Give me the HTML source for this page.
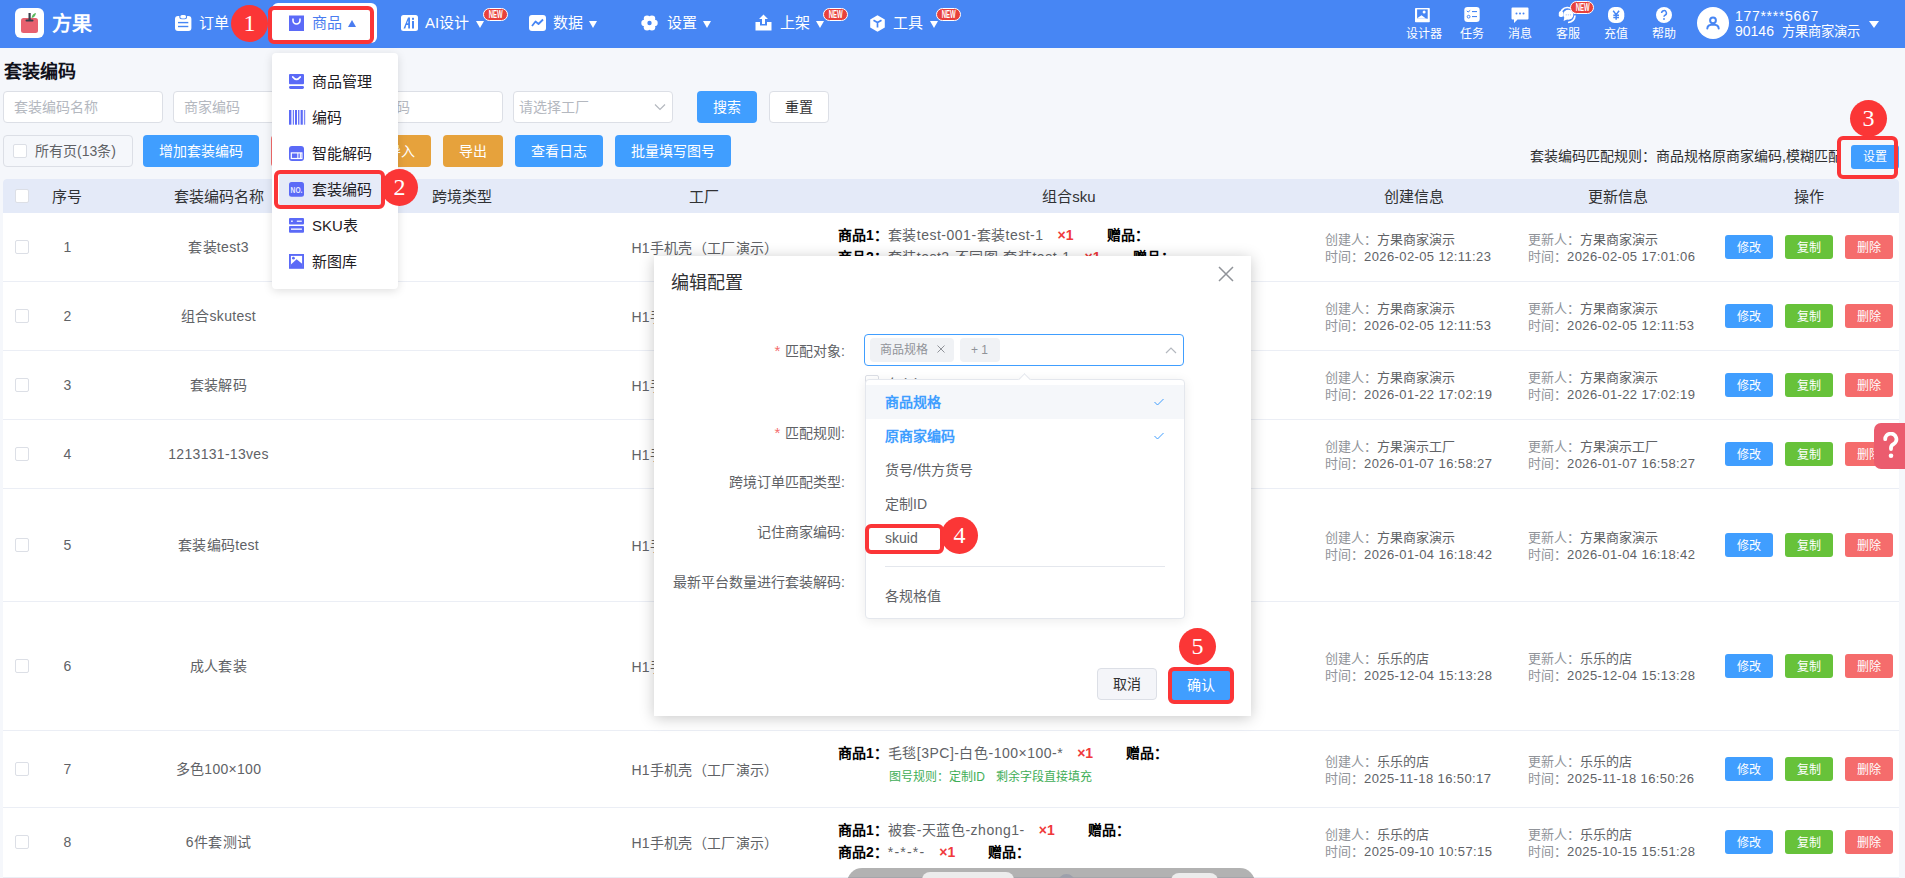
<!DOCTYPE html>
<html lang="zh-CN"><head><meta charset="utf-8">
<style>
*{box-sizing:border-box;margin:0;padding:0}
html,body{width:1905px;height:878px;overflow:hidden}
body{position:relative;background:#f5f7fb;font-family:"Liberation Sans",sans-serif;color:#303133;font-size:14px}
.a{position:absolute;white-space:nowrap}
#hdr{position:absolute;left:0;top:0;width:1905px;height:48px;background:#4786f4}
.nav{position:absolute;top:0;height:48px;color:#fff;font-size:15px}
.nav .t{position:absolute;top:14px;line-height:18px}
.tri{position:absolute;width:0;height:0;border-left:4.5px solid transparent;border-right:4.5px solid transparent}
.tri.d{border-top:7px solid #fff}
.tri.u{border-bottom:7px solid #4a7cf0}
.new{position:absolute;height:13px;width:25px;border-radius:7px;background:#e8413c;border:1px solid #fff;color:#fff;font-size:10px;font-weight:bold;line-height:11px;text-align:center;font-family:"Liberation Sans Narrow","Liberation Sans",sans-serif}
.new span{display:inline-block;transform:scaleX(0.6);letter-spacing:0;font-size:10px;font-weight:900}
.ric{position:absolute;top:0;width:40px;height:48px;color:#fff;font-size:12px;text-align:center}
.ric .t{position:absolute;left:0;right:0;top:27px;line-height:13px}
.circ{position:absolute;border-radius:50%;background:#fb3636;color:#fff;font-family:"Liberation Serif",serif;text-align:center}
.redbox{position:absolute;border:4px solid #fb3537;border-radius:6px}
.inp{position:absolute;height:32px;background:#fff;border:1px solid #dcdfe6;border-radius:4px;color:#b4b8bf;font-size:14px;line-height:30px;padding-left:10px}
.btn{position:absolute;height:32px;border-radius:4px;color:#fff;font-size:14px;line-height:32px;text-align:center}
.blue{background:#409eff}
.orange{background:#e6a23c}
.red{background:#f56c6c}
.green{background:#67c23a}
.cb{position:absolute;width:14px;height:14px;border:1px solid #dcdfe6;border-radius:2px;background:#fff}
#tbl{position:absolute;left:4px;top:179px;width:1895px;height:699px;background:#fff}
.th{position:absolute;top:0;height:33px;background:#e4eaf8;width:1895px}
.th .h{position:absolute;top:8px;line-height:17px;font-size:14px;color:#303133;transform:translateX(-50%)}
.rowline{position:absolute;left:0;width:1895px;height:1px;background:#ebeef5}
.cell{position:absolute;font-size:14px;color:#606266;line-height:16px;letter-spacing:0.3px}
.cc{transform:translateX(-50%)}
.info{position:absolute;font-size:13px;line-height:17px;color:#606266}
.info .g{color:#909399}
.sb{position:absolute;width:48px;height:24px;border-radius:3px;color:#fff;font-size:12px;line-height:24px;padding-top:1px;text-align:center}
.sku{position:absolute;font-size:14px;line-height:17px;color:#606266}
.sku b{color:#000;font-weight:bold}
.hd{font-size:15px;line-height:17px;color:#303133;transform:translateX(-50%)}
.dg{letter-spacing:0.4px}
.mi{font-size:15px;line-height:18px;color:#1f2024}
.dl{font-size:14px;line-height:17px;color:#606266;text-align:right}
.rq{color:#f56c6c;font-size:15px;margin-right:1px}
.opt{left:885px;font-size:14px;line-height:18px;color:#606266}
.opt.sel{color:#409eff;font-weight:bold}
.sku .pn{letter-spacing:0.5px}
.sku .x{color:#f0393b;font-weight:bold}
</style></head><body>

<div id="hdr"></div>

<!-- logo -->
<svg class="a" style="left:15px;top:8px" width="30" height="30" viewBox="0 0 30 30">
<rect x="0" y="0" width="29" height="30" rx="6" fill="#fff"/>
<rect x="6" y="10" width="17" height="15" rx="2.5" fill="#e8616f"/>
<rect x="13.5" y="5" width="2.2" height="8" fill="#3a3f4b"/>
<rect x="10.5" y="11.5" width="8" height="2" rx="1" fill="#3a3f4b"/>
<path d="M16.5 10 C17 7 18.5 5.5 21 5 C20.5 8 19 9.5 16.5 10Z" fill="#5cb85c"/>
</svg>
<div class="a" style="left:52px;top:13px;font-size:20px;font-weight:900;color:#fff;line-height:22px;letter-spacing:0px">方果</div>

<!-- 订单 -->
<svg class="a" style="left:175px;top:15px" width="17" height="16" viewBox="0 0 17 16">
<rect x="0" y="1" width="16.4" height="15" rx="3" fill="#fff"/>
<rect x="4.3" y="-0.7" width="7.8" height="5" rx="2.5" fill="#4786f4"/>
<rect x="5.3" y="0.1" width="5.8" height="3.4" rx="1.7" fill="#fff"/>
<rect x="3" y="6.9" width="10.3" height="1.4" fill="#4786f4"/><rect x="3" y="10.8" width="10.3" height="1.4" fill="#4786f4"/>
</svg>
<div class="a" style="left:199px;top:14px;font-size:15px;line-height:18px;color:#fff">订单</div>

<!-- 商品 active -->
<div class="a" style="left:272px;top:3px;width:105px;height:40px;background:#fff;border-radius:6px"></div>
<svg class="a" style="left:288px;top:15px" width="17" height="16" viewBox="0 0 17 16">
<path d="M1 0.5 h15 v15.5 h-15z" fill="#5b6af7"/>
<path d="M5 3.5 v2 a3.5 3.5 0 0 0 7 0 v-2" stroke="#fff" stroke-width="1.6" fill="none"/>
</svg>
<div class="a" style="left:312px;top:14px;font-size:15px;line-height:18px;color:#4a7cf0">商品</div>
<div class="tri u" style="left:348px;top:20px"></div>
<div class="redbox" style="left:268px;top:6px;width:106px;height:38px"></div>
<div class="circ" style="left:231px;top:5px;width:37px;height:37px;font-size:24px;line-height:36px">1</div>

<!-- AI设计 -->
<svg class="a" style="left:401px;top:15px" width="17" height="16" viewBox="0 0 17 16">
<rect x="0" y="0" width="17" height="16" rx="2.5" fill="#fff"/>
<path d="M2.5 13.5 L7 2.5 L9 2.5 L9 13.5 L7.2 13.5 L7.2 10 L5.3 10 L4.3 13.5Z M6 8.3 L7.2 8.3 L7.2 5.3Z" fill="#4786f4"/>
<rect x="11" y="6" width="2" height="7.5" fill="#4786f4"/><rect x="11" y="2.8" width="2" height="2" fill="#4786f4"/>
</svg>
<div class="a" style="left:425px;top:14px;font-size:15px;line-height:18px;color:#fff">AI设计</div>
<div class="tri d" style="left:476px;top:21px"></div>
<div class="new" style="left:483px;top:8px"><span>NEW</span></div>

<!-- 数据 -->
<svg class="a" style="left:529px;top:15px" width="17" height="16" viewBox="0 0 17 16">
<rect x="0" y="0" width="17" height="16" rx="3" fill="#fff"/>
<path d="M3 11 L6.5 6.5 L9.5 9 L14 4.5" stroke="#4786f4" stroke-width="1.8" fill="none" stroke-linejoin="round"/>
</svg>
<div class="a" style="left:553px;top:14px;font-size:15px;line-height:18px;color:#fff">数据</div>
<div class="tri d" style="left:589px;top:21px"></div>

<!-- 设置 -->
<svg class="a" style="left:641px;top:15px" width="18" height="16" viewBox="0 0 18 16">
<circle cx="8.5" cy="8" r="5.5" fill="#fff"/><circle cx="13.40" cy="8.00" r="3.3" fill="#fff"/><circle cx="10.95" cy="12.24" r="3.3" fill="#fff"/><circle cx="6.05" cy="12.24" r="3.3" fill="#fff"/><circle cx="3.60" cy="8.00" r="3.3" fill="#fff"/><circle cx="6.05" cy="3.76" r="3.3" fill="#fff"/><circle cx="10.95" cy="3.76" r="3.3" fill="#fff"/>
<circle cx="8.5" cy="8" r="2.2" fill="#4786f4"/>
</svg>
<div class="a" style="left:667px;top:14px;font-size:15px;line-height:18px;color:#fff">设置</div>
<div class="tri d" style="left:703px;top:21px"></div>

<!-- 上架 -->
<svg class="a" style="left:755px;top:14px" width="17" height="17" viewBox="0 0 17 17">
<path d="M8.5 0.5 L13 5 H10 V10 H7 V5 H4Z" fill="#fff"/>
<path d="M0.5 8 H5 V11.5 H12 V8 H16.5 V16.5 H0.5Z" fill="#fff"/>
</svg>
<div class="a" style="left:780px;top:14px;font-size:15px;line-height:18px;color:#fff">上架</div>
<div class="tri d" style="left:816px;top:21px"></div>
<div class="new" style="left:823px;top:8px"><span>NEW</span></div>

<!-- 工具 -->
<svg class="a" style="left:869px;top:15px" width="17" height="17" viewBox="0 0 17 17">
<path d="M8.5 0.3 L15.8 4.4 V12.6 L8.5 16.7 L1.2 12.6 V4.4Z" fill="#fff"/>
<path d="M4.5 5.3 L8.5 7.6 L12.5 5.3 M8.5 7.6 V12.5" stroke="#4786f4" stroke-width="1.7" fill="none"/>
</svg>
<div class="a" style="left:893px;top:14px;font-size:15px;line-height:18px;color:#fff">工具</div>
<div class="tri d" style="left:930px;top:21px"></div>
<div class="new" style="left:936px;top:8px"><span>NEW</span></div>

<!-- right icons -->
<svg class="a" style="left:1415px;top:8px" width="15" height="15" viewBox="0 0 15 15">
<rect x="0" y="0" width="14.8" height="14.3" rx="0.8" fill="#fff"/>
<rect x="2.1" y="1.4" width="10.6" height="9.4" fill="#4786f4"/>
<path d="M2.1 10.8 L2.1 10.2 L6.5 7.3 L9.3 9.2 L10.4 10.3 L12.7 10.8Z" fill="#fff"/>
<circle cx="9.1" cy="3.9" r="1.5" fill="#fff"/>
</svg>
<div class="a" style="left:1406px;top:28px;font-size:12px;line-height:13px;color:#fff">设计器</div>

<svg class="a" style="left:1464px;top:7px" width="16" height="16" viewBox="0 0 16 16">
<rect x="0.3" y="0" width="15.4" height="15" rx="3.2" fill="#fff"/>
<path d="M2.8 3.9 L4.1 5 L6.2 3.4" stroke="#4786f4" stroke-width="1" fill="none"/>
<rect x="8" y="4" width="5" height="1.1" fill="#4786f4"/>
<circle cx="4.6" cy="9.7" r="1.4" fill="none" stroke="#4786f4" stroke-width="1"/>
<rect x="8" y="9" width="5" height="1.1" fill="#4786f4"/>
</svg>
<div class="a" style="left:1460px;top:28px;font-size:12px;line-height:13px;color:#fff">任务</div>

<svg class="a" style="left:1511px;top:7px" width="18" height="17" viewBox="0 0 18 17">
<path d="M1.5 0.5 h15 a1 1 0 0 1 1 1 v10 a1 1 0 0 1 -1 1 h-10 l-3.5 3.5 v-3.5 h-1.5 a1 1 0 0 1 -1 -1 v-10 a1 1 0 0 1 1 -1z" fill="#fff"/>
<circle cx="5.5" cy="6.5" r="1" fill="#4786f4"/><circle cx="9" cy="6.5" r="1" fill="#4786f4"/><circle cx="12.5" cy="6.5" r="1" fill="#4786f4"/>
</svg>
<div class="a" style="left:1508px;top:28px;font-size:12px;line-height:13px;color:#fff">消息</div>

<svg class="a" style="left:1557px;top:5px" width="21" height="19" viewBox="0 0 21 19">
<path d="M3.5 10 A7 7 0 0 1 17.5 9" stroke="#fff" stroke-width="1.7" fill="none"/>
<rect x="1.8" y="6.3" width="4.5" height="5.6" rx="1.6" fill="#fff"/>
<circle cx="11.3" cy="9.8" r="5" fill="#fff"/>
<path d="M7.3 12.5 L6.6 16 L10.5 14.3Z" fill="#fff"/>
<circle cx="9.2" cy="9.8" r="0.6" fill="#9dbaf7"/><circle cx="11.3" cy="9.8" r="0.6" fill="#9dbaf7"/><circle cx="13.4" cy="9.8" r="0.6" fill="#9dbaf7"/>
<path d="M18 10.5 Q17.6 16.8 11 17.5" stroke="#fff" stroke-width="1.7" fill="none"/>
</svg>
<div class="a" style="left:1556px;top:28px;font-size:12px;line-height:13px;color:#fff">客服</div>
<div class="new" style="left:1570px;top:1px;width:24px"><span>NEW</span></div>

<svg class="a" style="left:1608px;top:7px" width="17" height="16" viewBox="0 0 17 16">
<rect x="0" y="0" width="16.3" height="16" rx="6.5" fill="#fff"/>
<path d="M5.2 3.8 L8.15 7.6 L11.1 3.8 M8.15 7.6 V12.8 M5.3 8.3 H11 M5.3 10.6 H11" stroke="#4786f4" stroke-width="1.5" fill="none"/>
</svg>
<div class="a" style="left:1604px;top:28px;font-size:12px;line-height:13px;color:#fff">充值</div>

<svg class="a" style="left:1656px;top:7px" width="16" height="16" viewBox="0 0 16 16">
<circle cx="8" cy="8" r="8" fill="#fff"/>
<path d="M5.6 6 a2.4 2.4 0 1 1 3.4 2.2 c-0.8 0.4 -1 0.8 -1 1.6" stroke="#4786f4" stroke-width="1.5" fill="none"/>
<circle cx="8" cy="12" r="0.9" fill="#4786f4"/>
</svg>
<div class="a" style="left:1652px;top:28px;font-size:12px;line-height:13px;color:#fff">帮助</div>

<div class="a" style="left:1697px;top:7px;width:32px;height:32px;border-radius:50%;background:#fff"></div>
<svg class="a" style="left:1704px;top:14px" width="18" height="18" viewBox="0 0 18 18">
<circle cx="9" cy="6.3" r="2.9" stroke="#4786f4" stroke-width="2" fill="none"/>
<path d="M3.3 14.5 Q3.5 10.8 9 10.6 Q14.5 10.8 14.7 14.5" stroke="#4786f4" stroke-width="2" fill="none" stroke-linecap="round"/>
</svg>
<div class="a" style="left:1735px;top:9px;font-size:14px;line-height:15px;color:#fff;letter-spacing:0.7px">177****5667</div>
<div class="a" style="left:1735px;top:24px;font-size:14px;line-height:15px;color:#fff">90146<span style="margin-left:8px;font-size:13.3px">方果商家演示</span></div>
<div class="tri d" style="left:1869px;top:21px;border-left-width:5px;border-right-width:5px"></div>

<!-- title -->
<div class="a" style="left:3.5px;top:62px;font-size:18px;line-height:20px;font-weight:900;color:#10111a">套装编码</div>

<!-- search row -->
<div class="inp" style="left:3px;top:91px;width:160px">套装编码名称</div>
<div class="inp" style="left:173px;top:91px;width:160px">商家编码</div>
<div class="inp" style="left:343px;top:91px;width:160px">商家编码</div>
<div class="inp" style="left:513px;top:91px;width:160px;padding-left:5px">请选择工厂</div>
<svg class="a" style="left:654px;top:103px" width="12" height="8" viewBox="0 0 12 8"><path d="M1 1.5 L6 6.5 L11 1.5" stroke="#b4b8bf" stroke-width="1.2" fill="none"/></svg>
<div class="btn blue" style="left:697px;top:91px;width:60px">搜索</div>
<div class="btn" style="left:769px;top:91px;width:60px;background:#fff;border:1px solid #dcdfe6;color:#303133;line-height:30px">重置</div>

<!-- button row -->
<div class="a" style="left:3px;top:135px;width:130px;height:32px;border:1px solid #dcdfe6;border-radius:4px"></div>
<div class="cb" style="left:13px;top:144px;width:14px;height:14px"></div>
<div class="a" style="left:35px;top:143px;font-size:14px;line-height:17px;color:#606266">所有页(13条)</div>
<div class="btn blue" style="left:143px;top:135px;width:116px">增加套装编码</div>
<div class="btn red" style="left:271px;top:135px;width:88px">批量删除</div>
<div class="btn orange" style="left:371px;top:135px;width:60px">导入</div>
<div class="btn orange" style="left:443px;top:135px;width:60px">导出</div>
<div class="btn blue" style="left:515px;top:135px;width:88px">查看日志</div>
<div class="btn blue" style="left:615px;top:135px;width:116px">批量填写图号</div>

<div class="a" style="left:1530px;top:148px;font-size:14px;line-height:17px;color:#303133;width:307px;overflow:hidden">套装编码匹配规则：商品规格原商家编码,模糊匹配</div>
<div class="btn blue" style="left:1851px;top:145px;width:48px;height:24px;line-height:24px;font-size:12px;border-radius:3px">设置</div>
<div class="redbox" style="left:1837px;top:136px;width:61px;height:43px"></div>
<div class="circ" style="left:1850px;top:100px;width:37px;height:37px;font-size:24px;line-height:36px">3</div>

<!-- table -->
<div class="a" style="left:3px;top:179px;width:1896px;height:699px;background:#fff;border-radius:4px 4px 0 0"></div>
<div class="a" style="left:3px;top:179px;width:1896px;height:34px;background:#e4eaf8;border-radius:4px 4px 0 0"></div>
<div class="cb" style="left:15px;top:189px;width:14px;height:14px;border-color:#dcdfe6"></div>
<div class="a hd" style="left:66.5px;top:188px">序号</div>
<div class="a hd" style="left:218.5px;top:188px">套装编码名称</div>
<div class="a hd" style="left:461.5px;top:188px">跨境类型</div>
<div class="a hd" style="left:704px;top:188px">工厂</div>
<div class="a hd" style="left:1069px;top:188px">组合sku</div>
<div class="a hd" style="left:1414px;top:188px">创建信息</div>
<div class="a hd" style="left:1617.5px;top:188px">更新信息</div>
<div class="a hd" style="left:1809px;top:188px">操作</div>
<div class="rowline" style="left:3px;top:281px;width:1896px"></div>
<div class="cb" style="left:15px;top:239.5px"></div>
<div class="a cell cc" style="left:67.5px;top:238.5px">1</div>
<div class="a cell cc" style="left:218.5px;top:238.5px">套装test3</div>
<div class="a cell cc" style="left:705px;top:239.5px">H1手机壳（工厂演示）</div>
<div class="a info" style="left:1325px;top:230.5px"><span class="g">创建人：</span>方果商家演示<br><span class="g">时间：</span><span class="dg">2026-02-05 12:11:23</span></div>
<div class="a info" style="left:1528px;top:230.5px"><span class="g">更新人：</span>方果商家演示<br><span class="g">时间：</span><span class="dg">2026-02-05 17:01:06</span></div>
<div class="sb blue" style="left:1725px;top:234.5px">修改</div>
<div class="sb green" style="left:1785px;top:234.5px">复制</div>
<div class="sb red" style="left:1845px;top:234.5px">删除</div>
<div class="rowline" style="left:3px;top:350px;width:1896px"></div>
<div class="cb" style="left:15px;top:308.5px"></div>
<div class="a cell cc" style="left:67.5px;top:307.5px">2</div>
<div class="a cell cc" style="left:218.5px;top:307.5px">组合skutest</div>
<div class="a cell cc" style="left:705px;top:308.5px">H1手机壳（工厂演示）</div>
<div class="a info" style="left:1325px;top:299.5px"><span class="g">创建人：</span>方果商家演示<br><span class="g">时间：</span><span class="dg">2026-02-05 12:11:53</span></div>
<div class="a info" style="left:1528px;top:299.5px"><span class="g">更新人：</span>方果商家演示<br><span class="g">时间：</span><span class="dg">2026-02-05 12:11:53</span></div>
<div class="sb blue" style="left:1725px;top:303.5px">修改</div>
<div class="sb green" style="left:1785px;top:303.5px">复制</div>
<div class="sb red" style="left:1845px;top:303.5px">删除</div>
<div class="rowline" style="left:3px;top:419px;width:1896px"></div>
<div class="cb" style="left:15px;top:377.5px"></div>
<div class="a cell cc" style="left:67.5px;top:376.5px">3</div>
<div class="a cell cc" style="left:218.5px;top:376.5px">套装解码</div>
<div class="a cell cc" style="left:705px;top:377.5px">H1手机壳（工厂演示）</div>
<div class="a info" style="left:1325px;top:368.5px"><span class="g">创建人：</span>方果商家演示<br><span class="g">时间：</span><span class="dg">2026-01-22 17:02:19</span></div>
<div class="a info" style="left:1528px;top:368.5px"><span class="g">更新人：</span>方果商家演示<br><span class="g">时间：</span><span class="dg">2026-01-22 17:02:19</span></div>
<div class="sb blue" style="left:1725px;top:372.5px">修改</div>
<div class="sb green" style="left:1785px;top:372.5px">复制</div>
<div class="sb red" style="left:1845px;top:372.5px">删除</div>
<div class="rowline" style="left:3px;top:488px;width:1896px"></div>
<div class="cb" style="left:15px;top:446.5px"></div>
<div class="a cell cc" style="left:67.5px;top:445.5px">4</div>
<div class="a cell cc" style="left:218.5px;top:445.5px">1213131-13ves</div>
<div class="a cell cc" style="left:705px;top:446.5px">H1手机壳（工厂演示）</div>
<div class="a info" style="left:1325px;top:437.5px"><span class="g">创建人：</span>方果演示工厂<br><span class="g">时间：</span><span class="dg">2026-01-07 16:58:27</span></div>
<div class="a info" style="left:1528px;top:437.5px"><span class="g">更新人：</span>方果演示工厂<br><span class="g">时间：</span><span class="dg">2026-01-07 16:58:27</span></div>
<div class="sb blue" style="left:1725px;top:441.5px">修改</div>
<div class="sb green" style="left:1785px;top:441.5px">复制</div>
<div class="sb red" style="left:1845px;top:441.5px">删除</div>
<div class="rowline" style="left:3px;top:601px;width:1896px"></div>
<div class="cb" style="left:15px;top:537.5px"></div>
<div class="a cell cc" style="left:67.5px;top:536.5px">5</div>
<div class="a cell cc" style="left:218.5px;top:536.5px">套装编码test</div>
<div class="a cell cc" style="left:705px;top:537.5px">H1手机壳（工厂演示）</div>
<div class="a info" style="left:1325px;top:528.5px"><span class="g">创建人：</span>方果商家演示<br><span class="g">时间：</span><span class="dg">2026-01-04 16:18:42</span></div>
<div class="a info" style="left:1528px;top:528.5px"><span class="g">更新人：</span>方果商家演示<br><span class="g">时间：</span><span class="dg">2026-01-04 16:18:42</span></div>
<div class="sb blue" style="left:1725px;top:532.5px">修改</div>
<div class="sb green" style="left:1785px;top:532.5px">复制</div>
<div class="sb red" style="left:1845px;top:532.5px">删除</div>
<div class="rowline" style="left:3px;top:730px;width:1896px"></div>
<div class="cb" style="left:15px;top:658.5px"></div>
<div class="a cell cc" style="left:67.5px;top:657.5px">6</div>
<div class="a cell cc" style="left:218.5px;top:657.5px">成人套装</div>
<div class="a cell cc" style="left:705px;top:658.5px">H1手机壳（工厂演示）</div>
<div class="a info" style="left:1325px;top:649.5px"><span class="g">创建人：</span>乐乐的店<br><span class="g">时间：</span><span class="dg">2025-12-04 15:13:28</span></div>
<div class="a info" style="left:1528px;top:649.5px"><span class="g">更新人：</span>乐乐的店<br><span class="g">时间：</span><span class="dg">2025-12-04 15:13:28</span></div>
<div class="sb blue" style="left:1725px;top:653.5px">修改</div>
<div class="sb green" style="left:1785px;top:653.5px">复制</div>
<div class="sb red" style="left:1845px;top:653.5px">删除</div>
<div class="rowline" style="left:3px;top:807px;width:1896px"></div>
<div class="cb" style="left:15px;top:761.5px"></div>
<div class="a cell cc" style="left:67.5px;top:760.5px">7</div>
<div class="a cell cc" style="left:218.5px;top:760.5px">多色100×100</div>
<div class="a cell cc" style="left:705px;top:761.5px">H1手机壳（工厂演示）</div>
<div class="a info" style="left:1325px;top:752.5px"><span class="g">创建人：</span>乐乐的店<br><span class="g">时间：</span><span class="dg">2025-11-18 16:50:17</span></div>
<div class="a info" style="left:1528px;top:752.5px"><span class="g">更新人：</span>乐乐的店<br><span class="g">时间：</span><span class="dg">2025-11-18 16:50:26</span></div>
<div class="sb blue" style="left:1725px;top:756.5px">修改</div>
<div class="sb green" style="left:1785px;top:756.5px">复制</div>
<div class="sb red" style="left:1845px;top:756.5px">删除</div>
<div class="rowline" style="left:3px;top:877px;width:1896px"></div>
<div class="cb" style="left:15px;top:835.0px"></div>
<div class="a cell cc" style="left:67.5px;top:834.0px">8</div>
<div class="a cell cc" style="left:218.5px;top:834.0px">6件套测试</div>
<div class="a cell cc" style="left:705px;top:835.0px">H1手机壳（工厂演示）</div>
<div class="a info" style="left:1325px;top:826.0px"><span class="g">创建人：</span>乐乐的店<br><span class="g">时间：</span><span class="dg">2025-09-10 10:57:15</span></div>
<div class="a info" style="left:1528px;top:826.0px"><span class="g">更新人：</span>乐乐的店<br><span class="g">时间：</span><span class="dg">2025-10-15 15:51:28</span></div>
<div class="sb blue" style="left:1725px;top:830.0px">修改</div>
<div class="sb green" style="left:1785px;top:830.0px">复制</div>
<div class="sb red" style="left:1845px;top:830.0px">删除</div>
<div class="a sku" style="left:838px;top:227px"><b>商品1：</b><span class="pn">套装test-001-套装test-1</span><span class="x" style="margin-left:14px">×1</span><b style="margin-left:33px">赠品：</b></div>
<div class="a sku" style="left:838px;top:249px"><b>商品2：</b><span class="pn">套装test2-不同图-套装test-1</span><span class="x" style="margin-left:14px">×1</span><b style="margin-left:33px">赠品：</b></div>
<div class="a sku" style="left:838px;top:745px"><b>商品1：</b><span class="pn">毛毯[3PC]-白色-100×100-*</span><span class="x" style="margin-left:14px">×1</span><b style="margin-left:33px">赠品：</b></div>
<div class="a" style="left:889px;top:769px;font-size:12px;line-height:16px;color:#3fae57">图号规则：定制ID<span style="margin-left:11px">剩余字段直接填充</span></div>
<div class="a sku" style="left:838px;top:822px"><b>商品1：</b><span class="pn">被套-天蓝色-zhong1-</span><span class="x" style="margin-left:14px">×1</span><b style="margin-left:33px">赠品：</b></div>
<div class="a sku" style="left:838px;top:844px"><b>商品2：</b><span class="pn" style="letter-spacing:1.2px">*-*-*-</span><span class="x" style="margin-left:14px">×1</span><b style="margin-left:33px">赠品：</b></div>


<!-- nav dropdown -->
<div class="a" style="left:272px;top:53px;width:126px;height:236px;background:#fff;border-radius:4px;box-shadow:0 2px 10px rgba(0,0,0,0.13)"></div>
<div class="a" style="left:279px;top:174px;width:103px;height:31px;background:#e6ebf8"></div>
<svg class="a" style="left:289px;top:74px" width="16" height="16" viewBox="0 0 16 16">
<rect x="0" y="0" width="15" height="10.3" rx="1" fill="#5b6af7"/><path d="M3.8 3 Q7.5 7.8 11.2 3" stroke="#fff" stroke-width="1.8" fill="none" stroke-linecap="round"/>
<rect x="0" y="12.1" width="15" height="2.8" rx="1.4" fill="#5b6af7"/>
</svg>
<div class="a mi" style="left:312px;top:73px">商品管理</div>
<svg class="a" style="left:289px;top:110px" width="17" height="16" viewBox="0 0 17 16">
<rect x="0" y="0" width="2.4" height="14.7" fill="#5b6af7"/><rect x="3.8" y="0" width="1.1" height="14.7" fill="#5b6af7"/><rect x="6" y="0" width="2" height="14.7" fill="#5b6af7"/><rect x="9.1" y="0" width="1.3" height="14.7" fill="#5b6af7"/><rect x="11.6" y="0" width="2.2" height="14.7" fill="#5b6af7"/><rect x="14.9" y="0" width="1.3" height="14.7" fill="#7d89f8"/>
</svg>
<div class="a mi" style="left:312px;top:109px">编码</div>
<svg class="a" style="left:289px;top:146px" width="16" height="16" viewBox="0 0 16 16">
<rect x="0" y="0" width="15" height="15" rx="3" fill="#5b6af7"/><rect x="2.3" y="6.9" width="10.6" height="5.6" fill="none" stroke="#fff" stroke-width="1.2"/>
<rect x="8.3" y="6.9" width="1.1" height="5.6" fill="#fff"/><rect x="10.8" y="6.9" width="1.1" height="5.6" fill="#fff"/>
</svg>
<div class="a mi" style="left:312px;top:145px">智能解码</div>
<svg class="a" style="left:289px;top:182px" width="16" height="16" viewBox="0 0 16 16">
<rect x="0" y="0" width="15" height="14.7" rx="2.5" fill="#5b6af7"/>
<g transform="translate(7.5 11.2) scale(0.78 1)"><text x="0" y="0" font-family="Liberation Sans Narrow,Liberation Sans,sans-serif" font-size="8.5" font-weight="bold" fill="#e8ebff" text-anchor="middle">NO.</text></g>
</svg>
<div class="a mi" style="left:312px;top:181px">套装编码</div>
<svg class="a" style="left:289px;top:218px" width="16" height="16" viewBox="0 0 16 16">
<rect x="0" y="0" width="15" height="6.5" rx="1" fill="#5b6af7"/><rect x="0" y="8" width="15" height="6.7" rx="1" fill="#5b6af7"/>
<rect x="2" y="2.6" width="1.8" height="1.2" fill="#fff"/><rect x="7.8" y="2.6" width="5" height="1.2" fill="#fff"/>
<rect x="2" y="10.5" width="10.9" height="1.3" fill="#fff"/>
</svg>
<div class="a mi" style="left:312px;top:217px">SKU表</div>
<svg class="a" style="left:289px;top:254px" width="16" height="16" viewBox="0 0 16 16">
<rect x="0" y="0" width="15" height="14.8" fill="#5b6af7"/><rect x="1.9" y="1.9" width="11.2" height="11" fill="#fff"/>
<path d="M1.9 10.6 L7.6 5.2 L13.1 9.8 L13.1 12.9 L1.9 12.9Z" fill="#5b6af7"/><circle cx="4.4" cy="4.2" r="1.4" fill="#5b6af7"/>
</svg>
<div class="a mi" style="left:312px;top:253px">新图库</div>
<div class="redbox" style="left:274px;top:170px;width:111px;height:39px"></div>
<div class="circ" style="left:381px;top:169px;width:37px;height:37px;font-size:24px;line-height:36px">2</div>

<!-- dialog -->
<div class="a" style="left:654px;top:256px;width:597px;height:460px;background:#fff;box-shadow:0 2px 14px rgba(0,0,0,0.22)"></div>
<div class="a" style="left:671px;top:273px;font-size:18px;line-height:20px;color:#303133">编辑配置</div>
<svg class="a" style="left:1218px;top:266px" width="16" height="16" viewBox="0 0 16 16"><path d="M1 1 L15 15 M15 1 L1 15" stroke="#909399" stroke-width="1.5"/></svg>
<div class="a dl" style="right:1060px;top:342px"><span class="rq">*</span> 匹配对象:</div>
<div class="a dl" style="right:1060px;top:424px"><span class="rq">*</span> 匹配规则:</div>
<div class="a dl" style="right:1060px;top:474px">跨境订单匹配类型:</div>
<div class="a dl" style="right:1060px;top:524px">记住商家编码:</div>
<div class="a dl" style="right:1060px;top:574px">最新平台数量进行套装解码:</div>
<div class="a" style="left:864px;top:334px;width:320px;height:32px;border:1px solid #409eff;border-radius:4px;background:#fff"></div>
<div class="a" style="left:870px;top:338px;width:84px;height:24px;background:#f0f2f5;border-radius:4px"></div>
<div class="a" style="left:880px;top:343px;font-size:12px;line-height:15px;color:#909399">商品规格</div>
<svg class="a" style="left:936px;top:344px" width="10" height="10" viewBox="0 0 10 10"><path d="M1.5 1.5 L8.5 8.5 M8.5 1.5 L1.5 8.5" stroke="#909399" stroke-width="1"/></svg>
<div class="a" style="left:960px;top:338px;width:40px;height:24px;background:#f0f2f5;border-radius:4px"></div>
<div class="a" style="left:971px;top:343px;font-size:12px;line-height:15px;color:#909399">+ 1</div>
<svg class="a" style="left:1165px;top:346px" width="12" height="8" viewBox="0 0 12 8"><path d="M1 7 L6 2 L11 7" stroke="#b4b8bf" stroke-width="1.2" fill="none"/></svg>
<!-- hidden checkbox behind dropdown -->
<div class="a" style="left:888px;top:375px;height:5px;overflow:hidden;font-size:14px;line-height:18px;color:#606266"><span style="position:relative;top:0px">仅(1)</span></div>
<div class="a" style="left:865px;top:375px;width:14px;height:14px;border:1px solid #dcdfe6;border-radius:2px;background:#fff"></div>
<!-- select dropdown -->
<div class="a" style="left:865px;top:379px;width:320px;height:240px;background:#fff;border:1px solid #e4e7ed;border-radius:4px;box-shadow:0 2px 12px rgba(0,0,0,0.08)"></div>
<div class="a" style="left:1019.5px;top:374.5px;width:9px;height:9px;background:#fff;border-left:1px solid #e4e7ed;border-top:1px solid #e4e7ed;transform:rotate(45deg)"></div>
<div class="a" style="left:866px;top:385px;width:318px;height:34px;background:#f5f7fa"></div>
<div class="a opt sel" style="top:393px">商品规格</div>
<svg class="a" style="left:1153px;top:397px" width="12" height="10" viewBox="0 0 12 10"><path d="M1.5 5 L4.5 8 L10.5 2" stroke="#409eff" stroke-width="1" fill="none"/></svg>
<div class="a opt sel" style="top:427px">原商家编码</div>
<svg class="a" style="left:1153px;top:431px" width="12" height="10" viewBox="0 0 12 10"><path d="M1.5 5 L4.5 8 L10.5 2" stroke="#409eff" stroke-width="1" fill="none"/></svg>
<div class="a opt" style="top:461px">货号/供方货号</div>
<div class="a opt" style="top:495px">定制ID</div>
<div class="a opt" style="top:529px">skuid</div>
<div class="a" style="left:885px;top:566px;width:280px;height:1px;background:#e4e7ed"></div>
<div class="a opt" style="top:587px">各规格值</div>
<div class="redbox" style="left:865px;top:524px;width:79px;height:30px"></div>
<div class="circ" style="left:941px;top:517px;width:37px;height:37px;font-size:24px;line-height:36px">4</div>

<div class="a" style="left:1097px;top:668px;width:60px;height:32px;border:1px solid #dcdfe6;border-radius:4px;background:#f4f5f9;font-size:14px;line-height:30px;text-align:center;color:#303133">取消</div>
<div class="a" style="left:1172px;top:671px;width:58px;height:29px;background:#409eff;font-size:14px;line-height:29px;text-align:center;color:#fff">确认</div>
<div class="redbox" style="left:1168px;top:667px;width:66px;height:37px"></div>
<div class="circ" style="left:1179px;top:628px;width:37px;height:37px;font-size:24px;line-height:36px">5</div>

<!-- floating help -->
<div class="a" style="left:1874px;top:423px;width:40px;height:46px;background:#eb5c6e;border-radius:7px"></div>
<svg class="a" style="left:1882px;top:432px" width="18" height="27" viewBox="0 0 18 27">
<path d="M3.2 7.2 a5.6 5.6 0 1 1 8.2 5 c-1.6 0.9 -2.4 1.7 -2.4 3.6 v1.3" stroke="#fff" stroke-width="3.8" fill="none" stroke-linecap="round"/>
<circle cx="9" cy="23.8" r="2.3" fill="#fff"/>
</svg>

<!-- bottom toolbar -->
<div class="a" style="left:847px;top:868px;width:408px;height:30px;background:rgba(0,0,0,0.3);border-radius:15px"></div>
<div class="a" style="left:922px;top:872px;width:92px;height:20px;background:#ececec;border-radius:8px"></div>
<div class="a" style="left:1058px;top:873.5px;width:17px;height:17px;background:#9da0ab;border-radius:50%"></div>
<div class="a" style="left:1171px;top:873px;width:47px;height:20px;background:#ececec;border-radius:8px"></div>

</body></html>
